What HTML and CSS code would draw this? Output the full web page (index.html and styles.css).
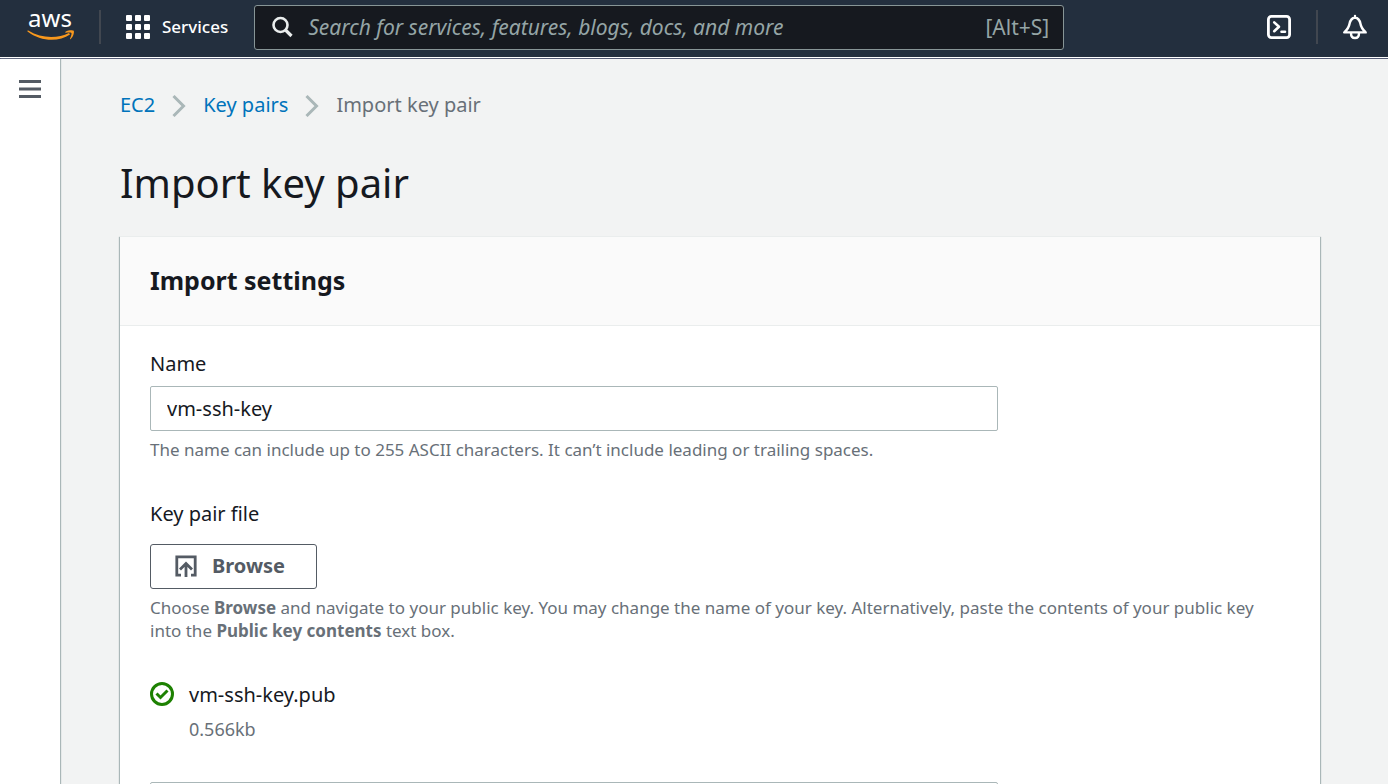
FILE: index.html
```html
<!DOCTYPE html>
<html lang="en">
<head>
<meta charset="utf-8">
<title>Import key pair</title>
<link rel="stylesheet" href="styles.css">
</head>
<body>
<header class="topbar">
  <a class="logo" href="#" aria-label="AWS home">
    <svg width="48" height="36" viewBox="0 0 48 36">
      <text class="logo-text" x="23" y="18" text-anchor="middle">aws</text>
      <path d="M.5 22.500C14 33 32 33 43 25.500l-1-1.500C31 29.500 15 30 1.200 21.600q-1.200-.2-.7.9z" fill="#f8981d"/>
      <path d="M38.500 22.800c3-2 7.500-1.800 8.200-1 .8 1-.3 6-3 8.300-.5.400-.9.200-.7-.3.700-1.600 2-5 1.400-5.800-.6-.8-4-.4-5.500-.2-.6 0-.9-.6-.4-1z" fill="#f8981d"/>
    </svg>
  </a>
  <span class="divider"></span>
  <button class="services" type="button">
    <svg width="24" height="24" viewBox="0 0 24 24" fill="#fff">
      <rect width="6" height="6" rx="1"/><rect x="9" width="6" height="6" rx="1"/><rect x="18" width="6" height="6" rx="1"/>
      <rect y="9" width="6" height="6" rx="1"/><rect x="9" y="9" width="6" height="6" rx="1"/><rect x="18" y="9" width="6" height="6" rx="1"/>
      <rect y="18" width="6" height="6" rx="1"/><rect x="9" y="18" width="6" height="6" rx="1"/><rect x="18" y="18" width="6" height="6" rx="1"/>
    </svg>
    <span>Services</span>
  </button>
  <label class="search">
    <svg width="22" height="22" viewBox="0 0 22 22" fill="none" stroke="#eaeded" stroke-width="2.600"><circle cx="8.500" cy="9" r="7"/><path d="M13.500 14l6 6" stroke-width="3.200"/></svg>
    <input class="search-input" type="search" aria-label="Search" placeholder="Search for services, features, blogs, docs, and more">
    <span class="shortcut">[Alt+S]</span>
  </label>
  <div class="tools">
    <button class="tool" type="button" aria-label="CloudShell">
      <svg width="24" height="24" viewBox="0 0 24 24" fill="none" stroke="#fff" stroke-width="2.800" stroke-linecap="round" stroke-linejoin="round"><rect x="1.400" y="1.400" width="21.200" height="21.200" rx="3"/><path d="M7.200 7.400l4.800 4.400-4.800 4.400M14.500 16.700h3.500" stroke-width="2.600"/></svg>
    </button>
    <span class="divider"></span>
    <button class="tool" type="button" aria-label="Notifications">
      <svg width="24" height="26" viewBox="0 0 24 26" fill="none" stroke="#fff" stroke-width="2.400" stroke-linejoin="round" stroke-linecap="round"><path d="M12 2v1.200M12 3.500c-3.300.7-4.800 3-5.400 6C6 13.500 4.500 15.500 1.300 18.400h21.400C19.500 15.500 18 13.500 17.400 9.500 16.800 6.500 15.300 4.200 12 3.500zM8 19.200c0 3.200 1.800 4.800 4 4.800s4-1.600 4-4.800"/></svg>
    </button>
  </div>
</header>
<div class="layout">
  <nav class="side">
    <button class="menu" type="button" aria-label="Open navigation">
      <svg width="22" height="18" viewBox="0 0 22 18" fill="#545b64"><rect width="22" height="3"/><rect y="7.500" width="22" height="3"/><rect y="15" width="22" height="3"/></svg>
    </button>
  </nav>
  <main class="content">
    <nav class="crumbs" aria-label="Breadcrumb">
      <a href="#">EC2</a>
      <svg width="14" height="24" viewBox="0 0 14 24" fill="none" stroke="#aab7b8" stroke-width="3"><path d="M1.500 3l10 10-10 10"/></svg>
      <a href="#">Key pairs</a>
      <svg width="14" height="24" viewBox="0 0 14 24" fill="none" stroke="#aab7b8" stroke-width="3"><path d="M1.500 3l10 10-10 10"/></svg>
      <span>Import key pair</span>
    </nav>
    <h1 class="title">Import key pair</h1>
    <section class="card">
      <h2 class="card-title">Import settings</h2>
      <form class="form">
        <label class="label" for="name">Name</label>
        <input class="field" id="name" type="text" value="vm-ssh-key">
        <p class="hint">The name can include up to 255 ASCII characters. It can’t include leading or trailing spaces.</p>
        <span class="label label-file" id="file-label">Key pair file</span>
        <button class="browse" type="button" aria-describedby="file-label">
          <svg width="22" height="22" viewBox="0 0 22 22" fill="none" stroke="#545b64" stroke-width="2.800"><path d="M6 20.200H1.800V1.800h18.400v18.400H16M11 22V8.500M5 14.500l6-6 6 6"/></svg>
          Browse
        </button>
        <p class="hint">Choose <b>Browse</b> and navigate to your public key. You may change the name of your key. Alternatively, paste the contents of your public key into the <b>Public key contents</b> text box.</p>
        <div class="file">
          <svg width="24" height="24" viewBox="0 0 24 24" fill="none" stroke="#1d8102" stroke-width="3"><circle cx="12" cy="12" r="10.500"/><path d="M6.500 11.500l4 4 7-7"/></svg>
          <div>
            <div class="file-name">vm-ssh-key.pub</div>
            <div class="file-size">0.566kb</div>
          </div>
        </div>
        <textarea class="field contents" aria-label="Public key contents"></textarea>
      </form>
    </section>
  </main>
</div>
</body>
</html>
```
FILE: styles.css
```css
* { box-sizing: border-box; }
body {
  margin: 0;
  height: 100vh;
  display: flex;
  flex-direction: column;
  overflow: hidden;
  font-family: "Noto Sans", "Open Sans", sans-serif;
  font-size: 20px;
  line-height: 30px;
  color: #16191f;
  background: #f2f3f3;
}
button, input, textarea { font: inherit; color: inherit; }
button { padding: 0; border: 0; background: none; }
svg { display: block; flex: none; }

.topbar {
  display: flex;
  align-items: center;
  flex: none;
  height: 59px;
  padding: 0 21px 5px 27px;
  background: #232f3e;
  box-shadow: inset 0 -1px #545b74, inset 0 -2px #fff;
  color: #fff;
}
.logo svg { overflow: visible; }
.logo-text { font-size: 24px; fill: #fff; }
.divider { width: 2px; height: 34px; background: #414750; }
.logo + .divider { margin: 0 25px 0 24px; }
.services {
  display: flex;
  align-items: center;
  gap: 12px;
  font-size: 17px;
  font-weight: 500;
}
.search {
  display: flex;
  align-items: center;
  flex: 0 1 810px;
  height: 45px;
  margin-left: 26px;
  padding: 0 14px 0 17px;
  gap: 14px;
  border: 1px solid #879596;
  border-radius: 3px;
  background: #16191f;
  color: #95a5a6;
  font-size: 21px;
}
.search-input {
  flex: 1;
  min-width: 0;
  padding: 0;
  border: 0;
  outline: 0;
  background: none;
}
.search-input::placeholder { color: #95a5a6; font-style: italic; }
.tools { display: flex; align-items: center; gap: 25px; margin-left: auto; }

.layout { display: flex; flex: 1; min-height: 0; }
.side {
  display: flex;
  align-items: flex-start;
  flex: none;
  width: 60px;
  padding: 21px 19px;
  background: #fff;
  box-shadow: 1px 0 1px #aab7b8;
}
.content { flex: 1; min-width: 0; overflow: hidden; padding: 31px 68px 0 60px; }
.crumbs { display: flex; align-items: center; gap: 17px; color: #687078; }
.crumbs a { color: #0073bb; text-decoration: none; }
.title { margin: 30px 0 21px; font-size: 40px; line-height: 65px; font-weight: 400; }
.card {
  background: #fff;
  border-top: 1px solid #eaeded;
  box-shadow: 0 1px 1px #aab7b8, 1px 1px 1px #aab7b8, -1px 1px 1px #aab7b8;
}
.card-title {
  margin: 0;
  padding: 28px 30px 30px;
  font-size: 25px;
  line-height: 30px;
  font-weight: 700;
  background: #fafafa;
  border-bottom: 1px solid #eaeded;
}
.form { padding: 23px 30px; }
.label { display: block; margin-bottom: 7px; }
.label-file { margin: 38px 0 15px; }
.field {
  display: block;
  width: 75%;
  max-width: 848px;
  height: 45px;
  padding: 0 16px;
  border: 1px solid #aab7b8;
  border-radius: 2px;
  background: #fff;
}
.hint {
  margin: 7px 0 0;
  padding-right: 10px;
  font-size: 17px;
  line-height: 23px;
  color: #687078;
}
.browse {
  display: flex;
  align-items: center;
  gap: 15px;
  height: 45px;
  padding: 0 31px 1px 24px;
  border: 1px solid #545b64;
  border-radius: 3px;
  color: #545b64;
  font-weight: 700;
}
.file { display: flex; gap: 15px; margin: 38px 0; }
.file svg { margin-top: 2px; }
.file-size { margin-top: 4px; font-size: 18px; color: #687078; }
.contents { height: 150px; resize: none; }
```
